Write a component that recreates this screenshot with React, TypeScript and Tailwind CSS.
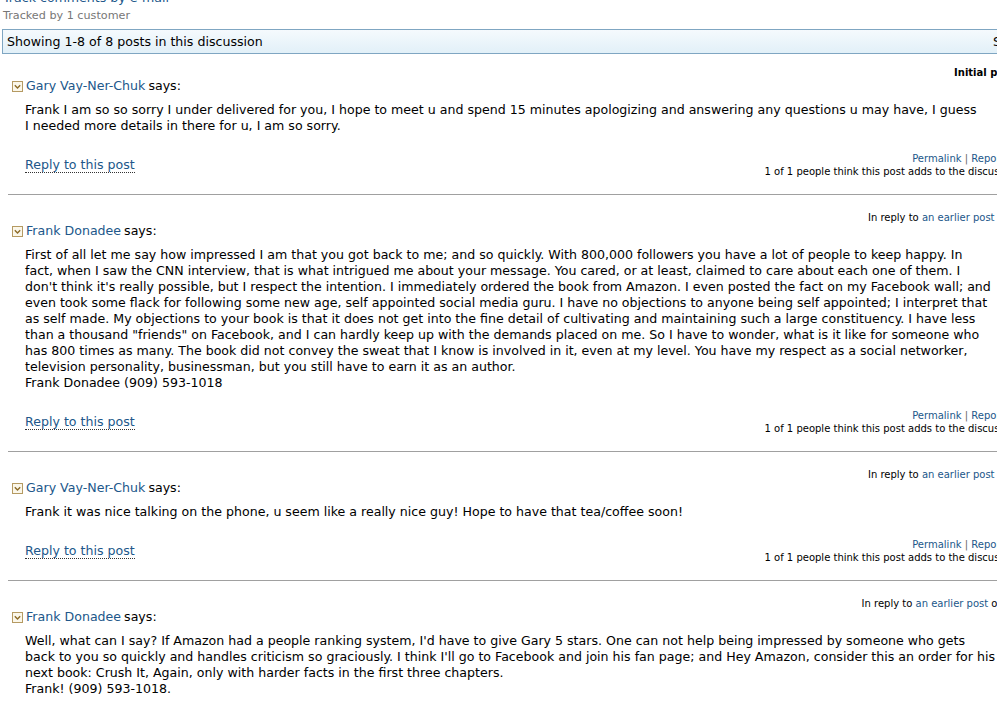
import React from "react";

type Post = {
  author: string;
  meta: React.ReactNode;
  lines: string[];
};

const posts: Post[] = [
  {
    author: "Gary Vay-Ner-Chuk",
    meta: <span className="font-bold">Initial post: Aug 30, 2009 4:52:04 PM</span>,
    lines: [
      "Frank I am so so sorry I under delivered for you, I hope to meet u and spend 15 minutes apologizing and answering any questions u may have, I guess",
      "I needed more details in there for u, I am so sorry.",
    ],
  },
  {
    author: "Frank Donadee",
    meta: (
      <>
        In reply to <span className="text-[#21578a]">an earlier post</span> on Aug 31, 2009 6:15:42 AM PDT
      </>
    ),
    lines: [
      "First of all let me say how impressed I am that you got back to me; and so quickly. With 800,000 followers you have a lot of people to keep happy. In",
      "fact, when I saw the CNN interview, that is what intrigued me about your message. You cared, or at least, claimed to care about each one of them. I",
      "don't think it's really possible, but I respect the intention. I immediately ordered the book from Amazon. I even posted the fact on my Facebook wall; and",
      "even took some flack for following some new age, self appointed social media guru. I have no objections to anyone being self appointed; I interpret that",
      "as self made. My objections to your book is that it does not get into the fine detail of cultivating and maintaining such a large constituency. I have less",
      "than a thousand \"friends\" on Facebook, and I can hardly keep up with the demands placed on me. So I have to wonder, what is it like for someone who",
      "has 800 times as many. The book did not convey the sweat that I know is involved in it, even at my level. You have my respect as a social networker,",
      "television personality, businessman, but you still have to earn it as an author.",
      "Frank Donadee (909) 593-1018",
    ],
  },
  {
    author: "Gary Vay-Ner-Chuk",
    meta: (
      <>
        In reply to <span className="text-[#21578a]">an earlier post</span> on Aug 31, 2009 8:02:17 AM PDT
      </>
    ),
    lines: [
      "Frank it was nice talking on the phone, u seem like a really nice guy! Hope to have that tea/coffee soon!",
    ],
  },
  {
    author: "Frank Donadee",
    meta: (
      <>
        In reply to <span className="text-[#21578a]">an earlier post</span> on Aug 31, 2009 10:44:51 AM PDT
      </>
    ),
    lines: [
      "Well, what can I say? If Amazon had a people ranking system, I'd have to give Gary 5 stars. One can not help being impressed by someone who gets",
      "back to you so quickly and handles criticism so graciously. I think I'll go to Facebook and join his fan page; and Hey Amazon, consider this an order for his",
      "next book: Crush It, Again, only with harder facts in the first three chapters.",
      "Frank! (909) 593-1018.",
    ],
  },
];

function Toggle() {
  return (
    <svg width="11" height="11" viewBox="0 0 11 11" className="shrink-0">
      <rect x="0.5" y="0.5" width="10" height="10" fill="#fbf7ea" stroke="#b59a62" />
      <path d="M2.8 4.2 L5.5 6.9 L8.2 4.2" fill="none" stroke="#8c6a26" strokeWidth="1.4" />
    </svg>
  );
}

function PostBlock({ post, last }: { post: Post; last: boolean }) {
  return (
    <div className="pl-[8px]">
      <div className="pl-[4px]">
        <div className="text-right text-[10px] leading-[12px] text-black whitespace-nowrap">{post.meta}</div>
        <div className="flex items-center gap-[3px] h-[14px] text-[12.6px]">
          <Toggle />
          <span className="text-[#21578a]">{post.author}</span>
          <span>says:</span>
        </div>
        <div className="pl-[13px] mt-[9px] text-[12.6px] leading-[16px] text-black">
          {post.lines.map((l, i) => (
            <div key={i} className="whitespace-nowrap">
              {l}
            </div>
          ))}
        </div>
        {!last && (
          <div className="flex items-center justify-between mt-[18px] h-[26px]">
            <a className="ml-[13px] text-[12.6px] leading-[15px] text-[#21578a] border-b border-dotted border-[#333]">
              Reply to this post
            </a>
            <div className="text-right text-[10px] leading-[13px] whitespace-nowrap">
              <div className="pr-[13px]">
                <span className="text-[#21578a]">Permalink</span> <span className="text-[#666]">|</span>{" "}
                <span className="text-[#21578a]">Report abuse | Ignore this customer</span>
              </div>
              <div className="pr-[61px]">1 of 1 people think this post adds to the discussion. Do you? Yes No</div>
            </div>
          </div>
        )}
      </div>
      {!last && <div className="mt-[16px] mb-[17px] h-px bg-[#a0a0a0]" />}
    </div>
  );
}

export default function App() {
  return (
    <div className="w-[997px] h-[705px] overflow-hidden bg-white text-black font-['DejaVu_Sans',sans-serif]">
      <div className="w-[1164px] -mt-[10px]">
        <div className="pl-[3px] text-[12.6px] leading-[16px] text-[#21578a]">Track comments by e-mail</div>
        <div className="pl-[3px] text-[11.2px] leading-[20px] text-[#777]">Tracked by 1 customer</div>
        <div className="ml-[2px] mt-[3px] h-[25px] pt-[2px] flex items-center border border-[#7fa6c2] bg-gradient-to-b from-[#f5fafd] to-[#e2f0f8] text-[12.6px]">
          <span className="w-[990px] pl-[4px]">Showing 1-8 of 8 posts in this discussion</span>
          <span>Sort: Oldest first</span>
        </div>
        <div className="mt-[13px]">
          {posts.map((p, i) => (
            <PostBlock key={i} post={p} last={i === posts.length - 1} />
          ))}
        </div>
      </div>
    </div>
  );
}
